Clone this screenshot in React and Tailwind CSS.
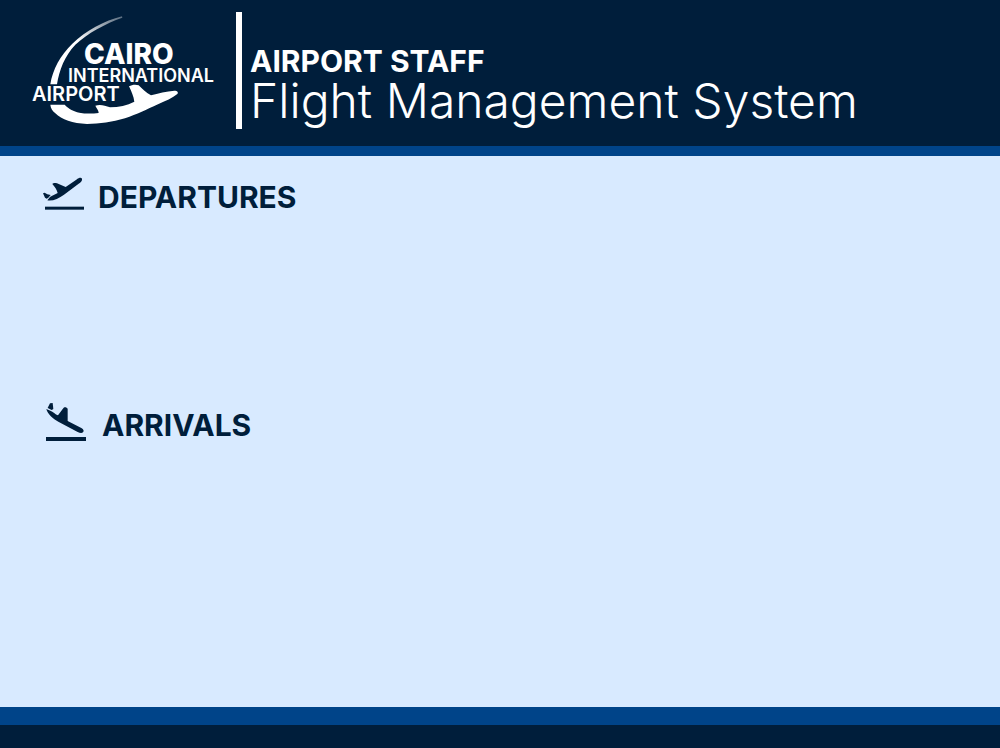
import React from "react";

function AirportLogo() {
  return (
    <div className="relative w-[184px] shrink-0 self-stretch pt-[29px] font-semibold">
      <svg
        className="absolute inset-0 h-[117px] w-[184px]"
        viewBox="36 21 552 351"
        fill="currentColor"
        aria-hidden="true"
      >
        <defs>
          <linearGradient id="trail" x1="0" y1="1" x2="1" y2="0">
            <stop offset="0.5" stopColor="#fff" />
            <stop offset="1" stopColor="#fff" stopOpacity="0.35" />
          </linearGradient>
        </defs>
        <path
          fill="url(#trail)"
          d="M91 238 C98 193 121 151 157 116 C197 78 253 47 306 34 L307 38 C257 55 201 86 166 119 C134 153 118 194 111 238 Z"
        />
        <path d="M91 299 H134 C148 313 160 319 178 323 C197 327 218 326 236 324 C236 315 229 309 226 302 C235 299 246 300 254 302 L270 307 C297 307 321 301 343 290 C341 275 335 261 327 244 C336 239 347 238 356 241 C367 252 379 264 393 271 C414 266 440 258 463 257 C472 257 476 262 472 267 C458 279 436 288 414 298 C379 314 352 328 315 340 C276 352 239 357 201 357 C158 356 125 343 106 325 C97 317 92 310 91 299 Z" />
      </svg>
      <p className="relative pl-[52px] text-[28px] font-extrabold leading-[26px]">CAIRO</p>
      <p className="relative whitespace-nowrap pl-9 text-[18px] leading-[18px]">INTERNATIONAL</p>
      <p className="relative text-[20px] leading-[18px]">AIRPORT</p>
    </div>
  );
}

function DepartureIcon() {
  return (
    <svg className="h-[44px] w-[50px] shrink-0" viewBox="0 0 150 132" fill="currentColor" aria-hidden="true">
      <path d="M9 64 L14 62 L22 67 L32 69 L25 77 L20 80 L15 77 Z" />
      <path d="M22 85 L30 75 C36 70 46 68 53 63 C50 53 45 45 37 36 C40 32 46 32 51 34 L77 45 L109 23 C117 17 124 16 126 20 C128 25 122 31 116 35 L72 68 C56 79 38 88 22 85 Z" />
      <rect x="15" y="104" width="117" height="9" />
    </svg>
  );
}

function ArrivalIcon() {
  return (
    <svg className="h-[44px] w-[50px] shrink-0" viewBox="0 0 150 132" fill="currentColor" aria-hidden="true">
      <path d="M24 10 L32 9 L34 27 L29 30 L17 24 Z" />
      <path d="M13 27 L25 32 C33 35 40 43 48 46 L65 23 C69 20 75 22 77 26 V63 L118 84 C125 88 127 93 123 97 C119 101 113 99 107 96 L49 65 C33 56 17 43 13 27 Z" />
      <rect x="12" y="111" width="120" height="12" />
    </svg>
  );
}

export default function App() {
  return (
    <div className="flex min-h-screen flex-col bg-[#d8eaff] font-['Inter','Liberation_Sans',sans-serif] text-[#001e3b]">
      <header className="flex border-b-[10px] border-[#004489] bg-[#001e3b] px-8 pb-[17px] pt-3 text-white">
        <AirportLogo />
        <div className="ml-5 w-1.5 shrink-0 bg-white" />
        <h1 className="flex h-[117px] flex-col pl-2 pt-8">
          <span className="text-[30px] font-bold leading-[34px]">AIRPORT STAFF</span>
          <span className="whitespace-nowrap text-[48px] font-light leading-[46px]">
            Flight Management System
          </span>
        </h1>
      </header>

      <main className="flex-1">
        <section className="min-h-[228px] pl-10 pt-4">
          <h2 className="flex items-center gap-2 text-[30px] font-bold leading-9">
            <DepartureIcon />
            <span className="pt-1.5">DEPARTURES</span>
          </h2>
        </section>
        <section className="min-h-[228px] pl-[42px] pt-4">
          <h2 className="flex items-center gap-[10px] text-[30px] font-bold leading-9">
            <ArrivalIcon />
            <span className="pt-1.5">ARRIVALS</span>
          </h2>
        </section>
      </main>

      <footer className="h-[41px] border-t-[18px] border-[#004489] bg-[#001e3b]" />
    </div>
  );
}
